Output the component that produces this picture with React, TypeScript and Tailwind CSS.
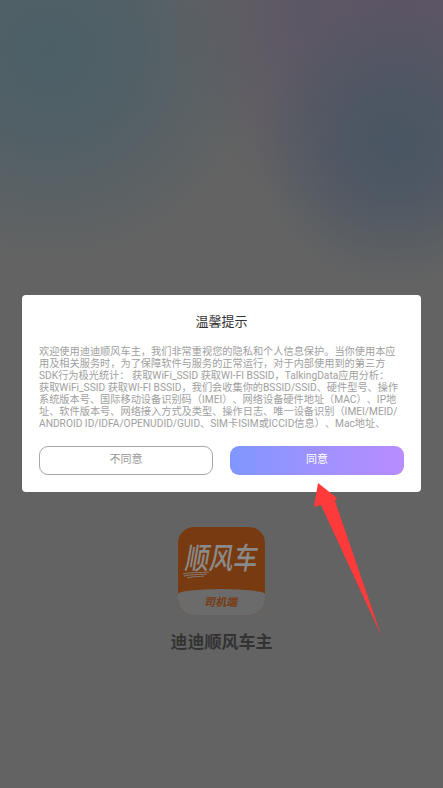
const lines = [
  '欢迎使用迪迪顺风车主，我们非常重视您的隐私和个人信息保护。当你使用本应',
  '用及相关服务时，为了保障软件与服务的正常运行，对于内部使用到的第三方',
  'SDK行为极光统计： 获取WiFi_SSID 获取WI-FI BSSID，TalkingData应用分析：',
  '获取WiFi_SSID 获取WI-FI BSSID，我们会收集你的BSSID/SSID、硬件型号、操作',
  '系统版本号、国际移动设备识别码（IMEI）、网络设备硬件地址（MAC）、IP地',
  '址、软件版本号、网络接入方式及类型、操作日志、唯一设备识别（IMEI/MEID/',
  'ANDROID ID/IDFA/OPENUDID/GUID、SIM卡ISIM或ICCID信息）、Mac地址、',
];

const App = () => {
  return (
    <div className="relative h-[788px] w-[443px] overflow-hidden bg-[#636363] font-['Roboto','Noto_Sans_CJK_SC',sans-serif]">
      <div className="absolute inset-0 bg-[radial-gradient(circle_at_395px_145px,#4a5663_0px,rgba(74,86,99,0.8)_50px,rgba(74,86,99,0)_140px),radial-gradient(circle_at_400px_5px,#5b5465_0px,rgba(91,84,101,0.75)_110px,rgba(91,84,101,0)_230px),radial-gradient(circle_at_50px_50px,#4c5f67_0px,rgba(76,95,103,0.75)_90px,rgba(76,95,103,0)_210px)]" />

      <div className="relative flex flex-col items-center pt-[295px]">
        <div className="flex h-[197px] w-[399px] flex-col rounded-[4px] bg-white px-[17px]">
          <h1 className="mt-[18px] text-center text-[13px] leading-[18px] font-normal text-[#333333]">温馨提示</h1>
          <div className="mt-[15px] text-[10.2px] leading-[12px] text-[#a0a0a0] [text-spacing-trim:space-all]">
            {lines.map((line) => (
              <p key={line} className="whitespace-nowrap">{line}</p>
            ))}
          </div>
          <div className="mt-[16px] flex gap-[17px]">
            <button className="h-[29px] w-[174px] rounded-[9px] border border-[#a8a8a8] text-[11px] text-[#999999]">不同意</button>
            <button className="h-[29px] w-[174px] rounded-[9px] bg-gradient-to-r from-[#8096ff] to-[#b88cff] text-[11px] text-white">同意</button>
          </div>
        </div>

        <div className="mt-[35px] flex h-[88px] w-[87px] flex-col overflow-hidden rounded-[16px] bg-[#783a10]">
          <div className="relative flex flex-1 items-start justify-center pt-[20px]">
            <span className="inline-block scale-y-125 -skew-x-12 text-[24px] leading-none font-medium whitespace-nowrap text-[#8a8a8a]">顺风车</span>
            <svg className="absolute top-[44px] left-[4px] h-[8px] w-[28px]" viewBox="0 0 28 8">
              <path d="M1 3 C9 1 18 2 27 1 M2 5 C10 3 18 4 25 3 M5 7 C12 5 18 6 22 5" fill="none" stroke="#8a8a8a" strokeWidth="0.8" />
            </svg>
          </div>
          <div className="flex h-[26px] items-center justify-center rounded-t-[50%_5px] bg-[#6b6b6b]">
            <span className="inline-block -skew-x-12 text-[11px] leading-none font-bold text-[#783a10]">司机端</span>
          </div>
        </div>
        <p className="mt-[15px] text-[17px] leading-[24px] font-bold text-[#333333]">迪迪顺风车主</p>
      </div>

      <svg className="absolute top-[480px] left-[310px] h-[160px] w-[75px]" viewBox="0 0 75 160">
        <polygon points="8,3 27,18 25,21 71,155 11,25 4,27" fill="#ff3a3a" />
      </svg>
    </div>
  );
};

export default App;
